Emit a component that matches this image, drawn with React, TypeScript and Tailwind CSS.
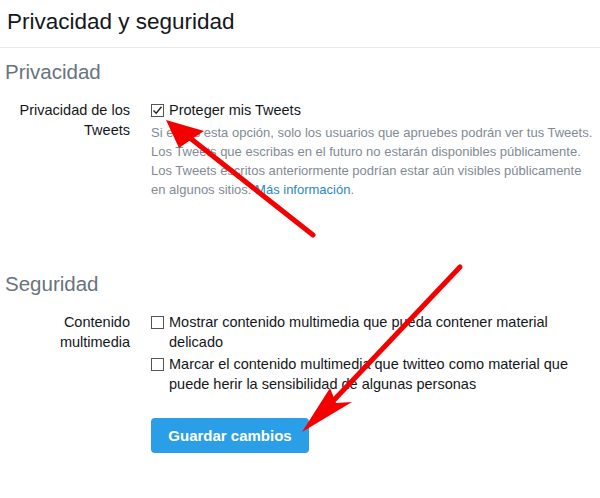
import React from "react";

function Box({ checked }: { checked?: boolean }) {
  return (
    <span className="mt-[4px] mr-[5px] flex h-[13px] w-[13px] shrink-0 items-center justify-center border border-[#555] bg-white">
      {checked && (
        <svg width="11" height="11" viewBox="0 0 11 11">
          <path d="M1.5 5.5 L4.2 8.2 L9.5 1.8" fill="none" stroke="#222" strokeWidth="1.4" />
        </svg>
      )}
    </span>
  );
}

export default function App() {
  return (
    <div
      className="relative h-[498px] w-[600px] overflow-hidden bg-white text-[#14171a]"
      style={{ fontFamily: '"Liberation Sans", Arial, sans-serif' }}
    >
      <div className="h-[48px] border-b border-[#e6e9eb] px-[7px] pt-[7px]">
        <h1 className="text-[22.5px] leading-[30px]">Privacidad y seguridad</h1>
      </div>

      <h2 className="mt-[10px] px-[5px] text-[20.5px] leading-[28px] text-[#68737d]">Privacidad</h2>

      <div className="mt-[14px] grid grid-cols-[130px_1fr] gap-x-[21px]">
        <div className="text-right text-[14.5px] leading-[20px]">
          Privacidad de los
          <br />
          Tweets
        </div>
        <div className="pr-[4px]">
          <div className="flex text-[14.5px] leading-[20px]">
            <Box checked />
            <span>Proteger mis Tweets</span>
          </div>
          <p className="mt-[3px] text-[13px] leading-[19px] text-[#7f8a94]">
            Si eliges esta opción, solo los usuarios que apruebes podrán ver tus Tweets.
            <br />
            Los Tweets que escribas en el futuro no estarán disponibles públicamente.
            <br />
            Los Tweets escritos anteriormente podrían estar aún visibles públicamente
            <br />
            en algunos sitios. <span className="text-[#2a86c8]">Más información</span>.
          </p>
        </div>
      </div>

      <h2 className="mt-[71px] px-[5px] text-[20.5px] leading-[28px] text-[#68737d]">Seguridad</h2>

      <div className="mt-[14px] grid grid-cols-[130px_1fr] gap-x-[21px]">
        <div className="text-right text-[14.5px] leading-[20px]">
          Contenido
          <br />
          multimedia
        </div>
        <div className="pr-[30px] text-[14.5px] leading-[20px]">
          <div className="flex">
            <Box />
            <span>Mostrar contenido multimedia que pueda contener material delicado</span>
          </div>
          <div className="mt-[2px] flex">
            <Box />
            <span>Marcar el contenido multimedia que twitteo como material que puede herir la sensibilidad de algunas personas</span>
          </div>
          <button className="mt-[24px] h-[35px] w-[158px] rounded-[4px] bg-[#2b9ee8] text-[15px] font-bold text-white">
            Guardar cambios
          </button>
        </div>
      </div>

      <svg className="pointer-events-none absolute left-0 top-0" width="600" height="498" viewBox="0 0 600 498">
        <line x1="313" y1="235" x2="190" y2="138" stroke="#f50000" strokeWidth="5" strokeLinecap="round" />
        <polygon points="166,120 179,148 192,139 204,131" fill="#f50000" />
        <line x1="460" y1="267" x2="334" y2="400" stroke="#f50000" strokeWidth="5" strokeLinecap="round" />
        <polygon points="302,432 330,388 336,403 352,402" fill="#f50000" />
      </svg>
    </div>
  );
}
